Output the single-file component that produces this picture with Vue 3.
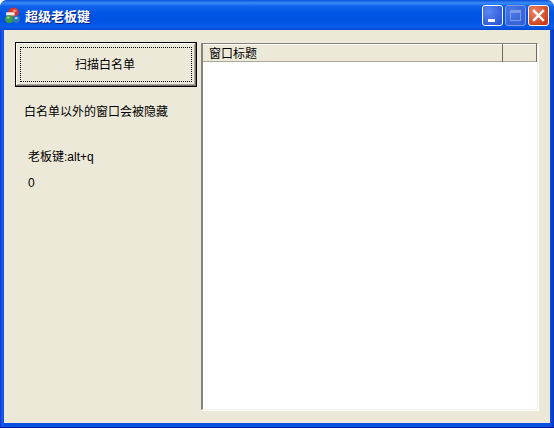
<script setup>
const columns = [
  { title: '窗口标题', width: '300px' },
  { title: '', width: '34px' }
]
</script>

<template>
  <div class="window">
    <div class="titlebar">
      <svg class="app-icon" width="17" height="17" viewBox="0 0 16 16">
        <ellipse cx="9" cy="5" rx="5" ry="4.5" fill="#d8322a" />
        <ellipse cx="10" cy="3.5" rx="2" ry="1.2" fill="#f08a78" />
        <rect x="2" y="5" width="8" height="3" fill="#f0eee4" />
        <ellipse cx="5" cy="11.5" rx="4" ry="3.8" fill="#3a9a45" />
        <ellipse cx="4" cy="10" rx="1.5" ry="1" fill="#8fd08f" />
        <ellipse cx="11.5" cy="11.5" rx="3.5" ry="3.5" fill="#2a78b8" />
        <ellipse cx="11.5" cy="10.5" rx="1.5" ry="1" fill="#9fd0ee" />
      </svg>
      <span class="title">超级老板键</span>
      <div class="caption-buttons">
        <button class="cap cap-min"><span class="min-glyph"></span></button>
        <button class="cap cap-max" disabled><span class="max-glyph"></span></button>
        <button class="cap cap-close">
          <svg width="13" height="13" viewBox="0 0 13 13">
            <path d="M2 2 L11 11 M11 2 L2 11" stroke="#fff" stroke-width="2.4" stroke-linecap="square" fill="none" />
          </svg>
        </button>
      </div>
    </div>
    <div class="client">
      <div class="sidebar">
        <button class="scan-btn"><span class="focus-ring">扫描白名单</span></button>
        <p class="hint">白名单以外的窗口会被隐藏</p>
        <p class="hotkey">老板键:alt+q</p>
        <p class="count">0</p>
      </div>
      <div class="listview">
        <div class="list-header">
          <div
            v-for="col in columns"
            :key="col.width"
            class="col"
            :style="{ width: col.width }"
          >{{ col.title }}</div>
          <div class="col-rest"></div>
        </div>
        <div class="list-body"></div>
      </div>
    </div>
  </div>
</template>

<style scoped>
.window {
  width: 554px;
  height: 428px;
  box-sizing: border-box;
  display: flex;
  flex-direction: column;
  padding: 0 4px 4px;
  background: linear-gradient(to right, #0831d9 0, #1f5cf0 2px, #0a50e0 4px, #0a50e0 550px, #0a3fd0 552px, #0831c0 554px);
  border-bottom: 1px solid #00139c;
  border-radius: 7px 7px 0 0;
  font-family: "Liberation Sans", "Noto Sans CJK SC", sans-serif;
  font-size: 12px;
  color: #000;
  overflow: hidden;
}

.titlebar {
  height: 30px;
  margin: 0 -4px;
  padding: 0 5px 0 4px;
  flex-shrink: 0;
  display: flex;
  align-items: center;
  background: linear-gradient(to bottom, #0a4fdc 0, #3a8cf8 3px, #0f62ec 6px, #0054e3 14px, #0054e3 22px, #0a5cea 27px, #0546cf 30px);
  border-radius: 7px 7px 0 0;
}

.app-icon {
  flex-shrink: 0;
  margin-top: 1px;
}

.title {
  margin-left: 4px;
  font-size: 13px;
  font-weight: 700;
  color: #fff;
  text-shadow: 1px 1px 0 #0a1f80;
}

.caption-buttons {
  margin-left: auto;
  display: flex;
  gap: 2px;
  margin-top: 1px;
}

.cap {
  width: 21px;
  height: 21px;
  padding: 0;
  box-sizing: border-box;
  border: 1px solid #fff;
  border-radius: 3px;
  display: flex;
  align-items: center;
  justify-content: center;
  background: radial-gradient(circle at 30% 30%, #5a88f4, #2f58d8 80%);
}

.cap-min {
  align-items: flex-end;
  justify-content: flex-start;
  padding: 0 0 3px 5px;
}

.min-glyph {
  width: 7px;
  height: 3px;
  background: #fff;
}

.cap-max {
  background: radial-gradient(circle at 30% 30%, #4a78e8, #3560d8 80%);
  border-color: #7e9ce8;
}

.max-glyph {
  width: 11px;
  height: 11px;
  box-sizing: border-box;
  border: 1px solid #7c9ce8;
  border-top-width: 3px;
}

.cap-close {
  background: radial-gradient(circle at 30% 30%, #e8876a, #d03a16 80%);
}

.client {
  flex: 1;
  min-height: 0;
  display: flex;
  background: #ece9d8;
  padding: 12px 12px 13px 11px;
}

.sidebar {
  width: 182px;
  flex-shrink: 0;
  margin-right: 4px;
}

.scan-btn {
  width: 100%;
  height: 45px;
  padding: 0;
  display: block;
  font: inherit;
  color: #000;
  background: #ece9d8;
  border: 1px solid #000;
  box-shadow: inset -1px -1px 0 #716f64, inset 1px 1px 0 #fff, inset -2px -2px 0 #aca899;
}

.focus-ring {
  margin: 4px;
  height: calc(100% - 8px);
  padding: 0 2px 2px 0;
  display: flex;
  align-items: center;
  justify-content: center;
  border: 1px dotted #000;
  box-sizing: border-box;
}

.hint,
.hotkey,
.count {
  margin: 0;
  line-height: 16px;
}

.hint {
  margin: 17px 0 0 9px;
}

.hotkey {
  margin: 29px 0 0 13px;
}

.count {
  margin: 10px 0 0 13px;
}

.listview {
  flex: 1;
  margin-top: 1px;
  display: flex;
  flex-direction: column;
  box-sizing: border-box;
  border: 1px solid #f5f4ec;
  border-top-color: #85837a;
  border-left: 2px solid #85837a;
  background: #fff;
  box-shadow: 1px 1px 0 #fff;
}

.list-header {
  height: 18px;
  flex-shrink: 0;
  display: flex;
  background: #ece9d8;
  box-shadow: inset 0 1px 0 #fff, inset 0 -1px 0 #aca899;
}

.col {
  flex-shrink: 0;
  box-sizing: border-box;
  padding-left: 6px;
  padding-top: 1px;
  line-height: 18px;
  border-right: 1px solid #716f64;
}

.col-rest {
  flex: 1;
}

.list-body {
  flex: 1;
  background: #fff;
}
</style>

<style>
html, body {
  margin: 0;
  background: #fff;
}
</style>
